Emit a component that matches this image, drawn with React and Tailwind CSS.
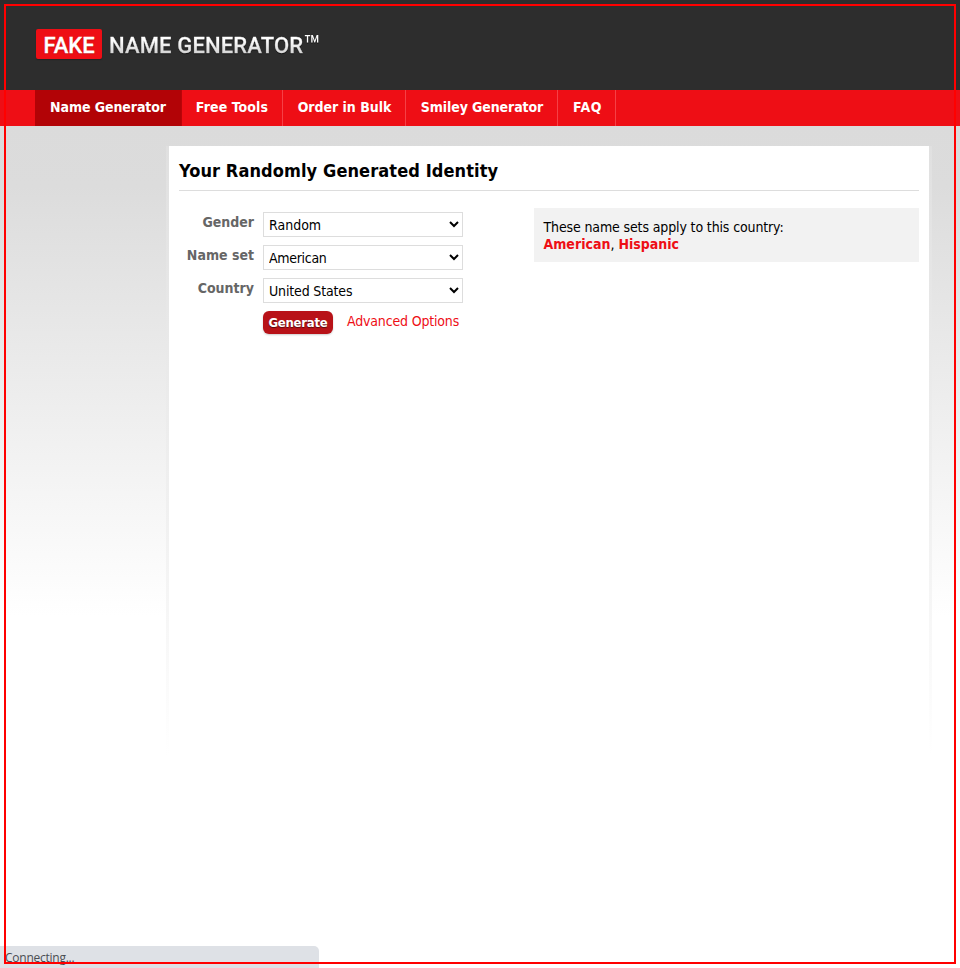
import React from "react";

const navItems = [
  { label: "Name Generator", cls: "w-[147px] bg-[#b20306] border-[#b90509]", text: "tracking-[-0.08px]" },
  { label: "Free Tools", cls: "w-[101px] border-[#f54046]", text: "tracking-[0.1px]" },
  { label: "Order in Bulk", cls: "w-[123px] border-[#f54046]", text: "pl-px tracking-[-0.02px]" },
  { label: "Smiley Generator", cls: "w-[152px] border-[#f54046]", text: "pl-px tracking-[-0.1px]" },
  { label: "FAQ", cls: "w-[58px] border-[#f54046]", text: "pl-[2px] tracking-[0.5px]" },
];

const fields = [
  { label: "Gender", value: "Random", text: "tracking-[0px]" },
  { label: "Name set", value: "American", text: "tracking-[-0.3px]" },
  { label: "Country", value: "United States", text: "tracking-[-0.15px]" },
];

function Logo() {
  return (
    <div className="flex h-[30px] items-center font-['Roboto',sans-serif] text-[22px] font-medium leading-[30px] whitespace-nowrap [font-stretch:normal]">
      <span className="flex h-[30px] w-[66px] items-center justify-center rounded-[2px] bg-[#ee0e15] text-white shadow-[0_1px_1px_#222]">
        <span className="pt-[3px] tracking-[0px] [-webkit-text-stroke:0.3px_#fff] [text-shadow:0_1px_1px_#8008]">FAKE</span>
      </span>
      <span className="ml-[7px] flex pt-[3px] drop-shadow-[0_1px_0.5px_#0008]">
        <span className="bg-gradient-to-b from-white from-30% to-[#cfcfcf] to-80% bg-clip-text tracking-[0.15px] text-transparent [-webkit-text-stroke:0.3px_transparent]">NAME GENERATOR</span>
        <span className="text-[28px] font-normal text-white">™</span>
      </span>
    </div>
  );
}

export default function App() {
  return (
    <div className="relative flex h-[968px] w-[960px] flex-col overflow-hidden bg-white font-['DejaVu_Sans_Condensed','DejaVu_Sans',sans-serif] text-[14px] text-black [font-stretch:condensed]">
      <header className="h-[90px] shrink-0 bg-[#2d2d2d] pt-[29px] pl-[36px]">
        <Logo />
      </header>
      <nav className="flex h-[36px] shrink-0 bg-[#ee0e15] pl-[35px]">
        {navItems.map((n) => (
          <a key={n.label} className={`flex h-full justify-center border-r pt-[7px] text-[14px] leading-[20px] font-bold whitespace-nowrap text-white ${n.cls}`}>
            <span className={n.text}>{n.label}</span>
          </a>
        ))}
      </nav>
      <main className="grow bg-[linear-gradient(to_bottom,#dbdbdb_0,#dcdcdc_60px,#fff_490px)] pt-[20px] pl-[166px]">
        <div className="w-[766px] bg-[linear-gradient(to_bottom,#e0e0e0_0,#f1f1f1_380px,#fff_610px)] px-[3px]">
          <section className="h-[822px] bg-white px-[10px]">
            <h1 className="h-[45px] border-b border-[#ddd] pt-[12px] text-[18px] leading-[25px] font-bold whitespace-nowrap">
              <span className="tracking-[0.1px]">Your Randomly Generated Identity</span>
            </h1>
            <div className="flex justify-between pt-[17px]">
              <form className="flex flex-col gap-[8px] pt-[4px]">
                {fields.map((f) => (
                  <div key={f.label} className="flex h-[25px]">
                    <label className="w-[75px] text-right text-[14px] leading-[20px] font-bold whitespace-nowrap text-[#666]">{f.label}</label>
                    <select className={`ml-[9px] h-[25px] w-[200px] border border-[#ddd] bg-white pr-0 pl-px text-[14px] ${f.text}`}>
                      <option>{f.value}</option>
                    </select>
                  </div>
                ))}
                <div className="flex pl-[84px]">
                  <button type="button" className="h-[23px] w-[70px] rounded-[6px] bg-[#b81218] text-center text-[13px] leading-[23px] font-bold tracking-[-0.25px] whitespace-nowrap text-white shadow-[0_1px_2px_#0003] [text-shadow:0_1px_1px_#0008]">
                    Generate
                  </button>
                  <a className="ml-[14px] text-[14px] leading-[20px] tracking-[-0.17px] whitespace-nowrap text-[#ee0e15]">Advanced Options</a>
                </div>
              </form>
              <aside className="h-[54px] w-[385px] bg-[#f2f2f2] px-[9.5px] pt-[11px] leading-[17px]">
                <p className="tracking-[-0.13px]">These name sets apply to this country:</p>
                <p>
                  <b className="text-[#ee0e15]">American</b>, <b className="text-[#ee0e15]">Hispanic</b>
                </p>
              </aside>
            </div>
          </section>
        </div>
      </main>
      <div className="absolute bottom-0 left-0 h-[22px] w-[319px] rounded-tr-[5px] bg-[#dee1e6] pl-[5px] font-['Open_Sans','Noto_Sans',sans-serif] text-[12px] leading-[24px] tracking-[-0.25px] text-[#4a4d52] [font-stretch:normal]">
        Connecting...
      </div>
      <div className="pointer-events-none absolute top-[4px] left-[4px] h-[960px] w-[952px] border-2 border-[#f00]" />
    </div>
  );
}
